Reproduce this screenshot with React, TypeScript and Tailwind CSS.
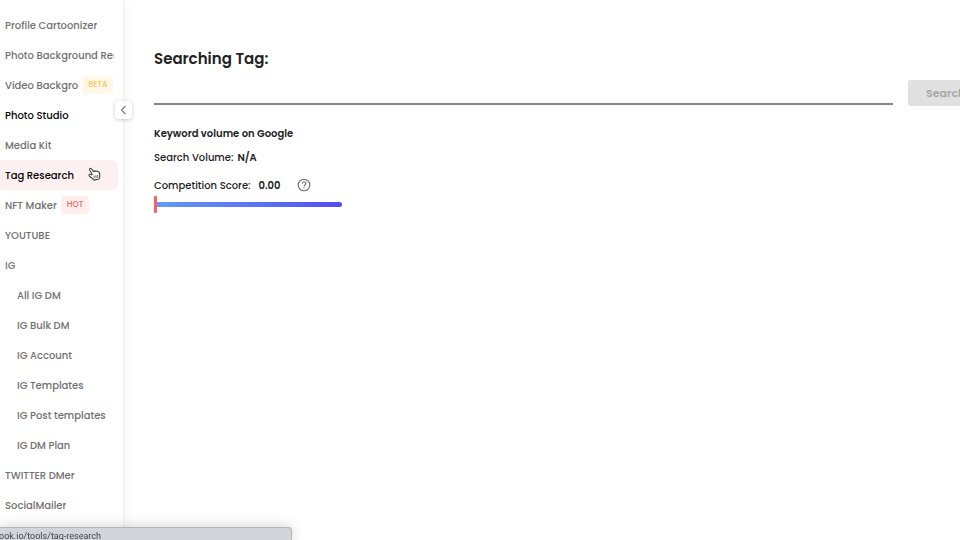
import { useState } from 'react';
import { clsx } from 'clsx';

type NavItem = {
  label: string;
  badge?: 'BETA' | 'HOT';
  bold?: boolean;
  active?: boolean;
  nested?: boolean;
};

const items: NavItem[] = [
  { label: 'Profile Cartoonizer' },
  { label: 'Photo Background Remover' },
  { label: 'Video Backgro', badge: 'BETA' },
  { label: 'Photo Studio', bold: true },
  { label: 'Media Kit' },
  { label: 'Tag Research', bold: true, active: true },
  { label: 'NFT Maker', badge: 'HOT' },
  { label: 'YOUTUBE' },
  { label: 'IG' },
  { label: 'All IG DM', nested: true },
  { label: 'IG Bulk DM', nested: true },
  { label: 'IG Account', nested: true },
  { label: 'IG Templates', nested: true },
  { label: 'IG Post templates', nested: true },
  { label: 'IG DM Plan', nested: true },
  { label: 'TWITTER DMer' },
  { label: 'SocialMailer' },
];

function Sidebar() {
  return (
    <aside className="relative w-31 shrink-0 border-r border-[#efefef] bg-white pt-[10px] shadow-[2px_0_12px_rgba(0,0,0,0.04)]">
      <nav>
        {items.map(item => (
          <a
            key={item.label}
            href="#"
            className={clsx(
              'mr-[5px] flex h-[30px] items-center gap-1 rounded-r-md pr-1 text-[10px] font-medium',
              item.nested ? 'pl-[17px]' : 'pl-[5px]',
              item.bold ? 'text-black' : 'text-[#6f6f6f]',
              item.active && 'bg-[#fdf0f0]',
            )}
          >
            <span className="min-w-0 overflow-hidden whitespace-nowrap">{item.label}</span>
            {item.badge && (
              <span
                className={clsx(
                  'flex h-[18px] shrink-0 items-center rounded-sm px-[6px] text-[8px] font-medium',
                  item.badge === 'BETA' ? 'bg-[#fff8e8] text-[#f5c65c]' : 'bg-[#ffeeee] text-[#e06a6a]',
                )}
              >
                {item.badge}
              </span>
            )}
          </a>
        ))}
      </nav>
      <button
        aria-label="Collapse menu"
        className="absolute top-[101px] -right-[9px] flex h-[18px] w-[17px] items-center justify-center rounded-sm bg-white shadow-[0_1px_4px_rgba(0,0,0,0.2)]"
      >
        <svg width="7" height="10" viewBox="0 0 7 10" fill="none" stroke="#777" strokeWidth="1.1">
          <path d="M5.5 1L1.5 5L5.5 9" />
        </svg>
      </button>
      <svg className="pointer-events-none absolute top-[167px] left-[88px]" width="13" height="15" viewBox="0 0 13 15">
        <path
          d="M4.2 7.6L1.7 3.2C1.1 1.6 2.8.7 3.7 2L5.4 4.6C5.8 3.8 7 3.6 7.5 4.5C8 3.7 9.2 3.9 9.6 4.8C10.5 4.4 11.2 5 11.4 6C12 8 12.1 9.6 11 12L6.1 13.1C5 11.4 2.6 10.4 1.2 8.8C.5 7.6 1.9 6.8 3 7.6Z"
          fill="#fff"
          stroke="#444"
          strokeWidth="1.1"
          strokeLinejoin="round"
        />
        <path d="M5.9 8.7L6.6 11.3M7.7 8.3L8.3 11M9.4 8L9.9 10.6" fill="none" stroke="#555" strokeWidth=".9" />
      </svg>
    </aside>
  );
}

export default function App() {
  const [tag, setTag] = useState('');

  return (
    <div className="flex h-screen overflow-hidden bg-white font-[Poppins,Inter,sans-serif]">
      <Sidebar />
      <main className="min-w-0 flex-1 pt-[47px] pl-[30px] text-[#222222]">
        <h1 className="text-[15px] leading-6 font-semibold">
          <label htmlFor="tag">Searching Tag:</label>
        </h1>
        {/* the button runs past the right edge of the window */}
        <form className="-mr-[38px] flex items-end gap-[15px] pt-[9px]" onSubmit={e => e.preventDefault()}>
          <input
            id="tag"
            value={tag}
            onChange={e => setTag(e.target.value)}
            className="mb-px h-6 min-w-0 flex-1 border-b-2 border-[#858585] text-xs outline-none"
          />
          <button disabled className="h-[26px] w-[90px] rounded-[3px] bg-[#e0e0e0] px-[18px] text-left text-[11px] font-semibold text-[#a6a6a6]">
            Search
          </button>
        </form>
        <section className="pt-5 text-[10px] font-medium">
          <h2 className="leading-4 font-semibold">Keyword volume on Google</h2>
          <p className="mt-2 flex items-center gap-1 leading-4">
            Search Volume: <strong className="font-semibold">N/A</strong>
          </p>
          <div className="mt-[10px] flex h-[18px] items-center">
            <label htmlFor="score">Competition Score:</label>
            <strong className="ml-2 font-semibold">0.00</strong>
            <button aria-label="About the score" className="ml-4">
              <svg width="14" height="14" viewBox="0 0 14 14" fill="none" stroke="#666" strokeWidth="1.1">
                <circle cx="7" cy="7" r="5.8" />
                <path d="M5.1 5.7C5.1 3.1 8.9 3.1 8.9 5.5C8.9 6.8 7 7 7 8.6M7 9.6V10.8" />
              </svg>
            </button>
          </div>
          <input
            id="score"
            type="range"
            min="0"
            max="1"
            step="0.01"
            value={0}
            readOnly
            className="mt-[2px] block h-[17px] w-[188px] appearance-none bg-transparent [&::-webkit-slider-runnable-track]:h-[5px] [&::-webkit-slider-runnable-track]:rounded-full [&::-webkit-slider-runnable-track]:bg-linear-to-r [&::-webkit-slider-runnable-track]:from-[#649bf5] [&::-webkit-slider-runnable-track]:to-[#544cf2] [&::-webkit-slider-thumb]:-mt-[6px] [&::-webkit-slider-thumb]:h-[17px] [&::-webkit-slider-thumb]:w-[3px] [&::-webkit-slider-thumb]:appearance-none [&::-webkit-slider-thumb]:rounded-[1px] [&::-webkit-slider-thumb]:bg-[#f3616b]"
          />
        </section>
      </main>
      <div className="fixed bottom-0 left-0 flex h-[13px] w-[292px] items-center overflow-hidden rounded-tr-sm border-t border-r border-[#b5b5b8] bg-[#d4d5da] pt-1 font-[Roboto,sans-serif] text-[9px] leading-3 whitespace-nowrap text-[#444444] shadow-[0_0_14px_rgba(0,0,0,0.2)]">
        <span className="-ml-px">ook.io/tools/tag-research</span>
      </div>
    </div>
  );
}
